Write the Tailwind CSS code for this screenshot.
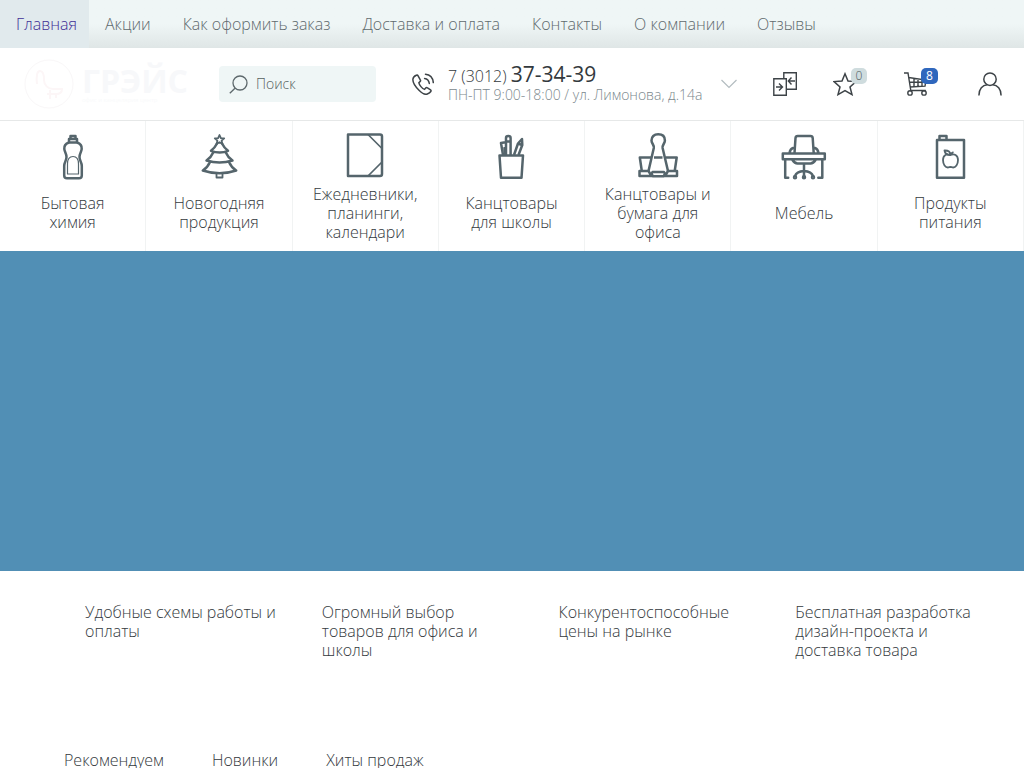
<!DOCTYPE html>
<html lang="ru">
<head>
<meta charset="utf-8">
<meta name="viewport" content="width=device-width, initial-scale=1">
<title>Грэйс</title>
<script src="https://cdn.jsdelivr.net/npm/@tailwindcss/browser@4"></script>
</head>
<body class="overflow-x-hidden bg-white font-['Open_Sans','Noto_Sans',sans-serif] text-base leading-[19px] font-light text-[#33393d]">

<nav class="flex h-12 bg-linear-to-b from-[#eff6f6] from-50% to-[#dfe6e6] leading-[19px] text-[#5f6a6e]">
  <a href="#" class="flex items-center bg-[#e1eaed] pr-3 pl-4 text-[#3f2f96]">Главная</a>
  <a href="#" class="flex items-center px-4">Акции</a>
  <a href="#" class="flex items-center px-4">Как оформить заказ</a>
  <a href="#" class="flex items-center px-4">Доставка и оплата</a>
  <a href="#" class="flex items-center px-4">Контакты</a>
  <a href="#" class="flex items-center px-4">О компании</a>
  <a href="#" class="flex items-center px-4">Отзывы</a>
</nav>

<header class="flex h-[73px] items-center border-b border-[#e6e8e8] pr-[22px] pl-6">
  <a href="#" class="flex w-[195px] shrink-0 items-center gap-2">
    <svg class="size-[50px] shrink-0" viewBox="0 0 50 50" fill="none" stroke="#fcf6f7" stroke-width="2"><circle cx="25" cy="25" r="24" stroke="#f9f7f8" stroke-width="1"/><path d="M13 25c-1-8 0-13 3-13s4 4 4 9 4 9 9 9h9c0 4-3 5-6 5h-9M26 31v9M32 35v4"/></svg>
    <span class="flex flex-col">
      <span class="text-[32px] leading-[32px] font-bold text-[#f7f8fa]">ГРЭЙС</span>
      <span class="text-[6px] leading-[6px] font-normal text-[#f9fafb]">офис и канцелярия центр</span>
    </span>
  </a>

  <form class="flex h-9 w-[157px] items-center gap-2 rounded bg-[#eff6f6] pl-[10px]">
    <button type="button" aria-label="Найти" class="shrink-0"><svg class="size-[19px]" viewBox="0 0 19 19" fill="none" stroke="#5d686c" stroke-width="1.3"><circle cx="11" cy="8" r="7"/><path d="M6 13.2.8 18.3"/></svg></button>
    <input type="text" aria-label="Поиск" placeholder="Поиск" class="min-w-0 flex-1 bg-transparent text-sm outline-none placeholder:text-[#56615f]">
  </form>

  <svg class="ml-9 size-[22px] shrink-0" viewBox="0 0 22 22" fill="none" stroke="#3d4347" stroke-width="1.5" stroke-linecap="round" stroke-linejoin="round"><path d="M4.3 2.3C2.600 3 1 4.500.9 6.200.7 8.700 3.300 13.500 7 17.200c3.200 3.200 6.600 4.500 8.300 3.800 1.600-.6 3-1.700 3.500-2.500.5-.7.300-1.200-.3-1.600l-3-2c-.7-.5-1.400-.3-1.900.2l-1 1.300c-2.500-.9-5.300-4.300-5.800-6.700l1.200-1.100c.6-.5.7-1.100.3-1.700L6.100 2.800c-.4-.7-1.100-.8-1.800-.5ZM12.600 5.400c2.800.4 4.300 2 4.700 5M13.500 1.200c4.600.5 7.400 3.700 7.800 8.400"/></svg>
  <div class="ml-[14px] flex shrink-0 items-center gap-3">
    <div class="min-w-[261px]">
      <a href="tel:73012373439" class="block leading-[20px]">7 (3012) <span class="text-[21px] leading-[20px] font-normal">37-34-39</span></a>
      <p class="text-sm leading-[18px] text-[#7b888d]">ПН-ПТ 9:00-18:00 / ул. Лимонова, д.14а</p>
    </div>
    <button type="button" aria-label="Все контакты"><svg class="h-[10px] w-4" viewBox="0 0 16 10" fill="none" stroke="#b3bcc0" stroke-width="1.2"><path d="m.5 1 7.500 7.500L15.500 1"/></svg></button>
  </div>

  <div class="ml-auto flex shrink-0 items-center">
    <a href="#" aria-label="Сравнение"><svg class="block size-6" viewBox="0 0 24 24" fill="none" stroke="#3d4347" stroke-width="1.400"><path d="M.8 6.700h12.500v16.500H.8ZM10.800 6.500V.8h12.500v16.500h-9.800M3 15h6.500M6 11.500 9.500 15 6 18.500M22 9h-6M18.500 5.500 15.300 9l3.200 3.500"/></svg></a>
    <a href="#" aria-label="Избранное" class="relative ml-9 w-[34px]">
      <svg class="block size-6" viewBox="0 0 24 24" fill="none" stroke="#3d4347" stroke-width="1.500"><path d="m12 1.800 3 7.200 8 .6-6 5.300 2 7.700-7-4-7 4 2-7.700-6-5.300 8-.6Z"/></svg>
      <span class="absolute -top-1 right-0 flex h-4 w-4 items-center justify-center rounded-[5px] bg-[#cfdcde] text-xs text-[#4d585c]">0</span>
    </a>
    <a href="#" aria-label="Корзина" class="relative ml-[37px] w-[34px]">
      <svg class="block size-6" viewBox="0 0 24 24" fill="none" stroke="#3d4347" stroke-width="1.400"><path d="M0 1h4l2.800 17.500h15M4.600 5.500 22 8l-1 6.200-15 .8M5.300 10.200h16M10 6v9M14 7v8M18 7.500v6.500"/><circle cx="6" cy="20.900" r="2.200"/><circle cx="20" cy="20.900" r="2.200"/></svg>
      <span class="absolute -top-1 right-0 flex h-4 w-[17px] items-center justify-center rounded-[5px] bg-[#2f67bd] text-xs font-normal text-white">8</span>
    </a>
    <a href="#" aria-label="Личный кабинет" class="ml-10"><svg class="block size-6" viewBox="0 0 24 24" fill="none" stroke="#3d4347" stroke-width="1.500"><circle cx="12" cy="7.200" r="6.200"/><path d="M.9 23.500C.9 17 4.500 13 9.300 12.800M14.700 12.800c4.800.2 8.400 4.200 8.400 10.700"/></svg></a>
  </div>
</header>

<section class="grid grid-cols-7 text-center">
  <a href="#" class="flex h-[130px] flex-col items-center border-r border-[#f1f3f3] pt-[11px]">
    <svg class="size-12 shrink-0" viewBox="0 0 48 48" fill="none" stroke="#55656c" stroke-width="2.500" stroke-linejoin="round"><path d="M21.500 4h5v3h-5ZM20 7h8v3.500h-8Z"/><path d="M20 10.500c-4 1.300-5 3.500-4.700 6.500.3 3 2.200 4.500 2.200 8 0 4-2.300 5-2.300 9v9.500c0 2 .8 2.800 2.800 2.800h12c2 0 2.800-.8 2.800-2.800V34c0-4-2.300-5-2.300-9 0-3.500 1.900-5 2.200-8 .3-3-.7-5.200-4.700-6.500"/><path stroke-width="1.200" d="M18.500 42V32c0-5 2-7.500 5.500-7.500s5.500 2.500 5.500 7.500v10Z"/></svg>
    <span class="flex h-[66px] items-center">Бытовая<br>химия</span>
  </a>
  <a href="#" class="flex h-[130px] flex-col items-center border-r border-[#f1f3f3] pt-[11px]">
    <svg class="size-12 shrink-0" viewBox="0 0 48 48" fill="none" stroke="#55656c" stroke-width="2.500" stroke-linejoin="round"><path stroke-width="1.800" d="m24.500 3 1.400 3.200 3.300.2-2.600 2.300.9 3.300-3-1.800-3 1.800.9-3.300-2.600-2.300 3.300-.2Z"/><path d="M22 11.500c-1.500 3-3.500 5.500-6 7.300 5.500 2 12 2 17 0-2.500-1.800-4.500-4.300-6-7.300M18.500 20c-1.500 3.500-3.800 6.300-7 8.500 8 2.500 18 2.500 26 0-3.200-2.200-5.500-5-7-8.500M15 30c-1.500 3.500-4 6.500-7.200 8.500 10.500 3.500 23 3.500 33.400 0C38 36.500 35.500 33.500 34 30"/><path stroke-width="1.800" d="M21.500 42v3.500h6V42"/></svg>
    <span class="flex h-[66px] items-center">Новогодняя<br>продукция</span>
  </a>
  <a href="#" class="flex h-[130px] flex-col items-center border-r border-[#f1f3f3] pt-[11px]">
    <svg class="size-12 shrink-0" viewBox="0 0 48 48" fill="none" stroke="#55656c" stroke-width="2.500" stroke-linejoin="round"><path d="M7 2.500h32q2 0 2 2v37.500q0 2-2 2H7Z"/><path stroke-width="1.700" d="m27 2.500 14 14M27 44l14-14"/></svg>
    <span class="flex h-[66px] items-center">Ежедневники,<br>планинги,<br>календари</span>
  </a>
  <a href="#" class="flex h-[130px] flex-col items-center border-r border-[#f1f3f3] pt-[11px]">
    <svg class="size-12 shrink-0" viewBox="0 0 48 48" fill="none" stroke="#55656c" stroke-width="2.500" stroke-linejoin="round"><path d="M12.500 23.500h23.500l-1.500 22.300H14Z"/><path d="M19 23V6q0-2 2.300-2t2.300 2v17M19 9.500h4.500M16 23l-2-12 4.500-.8M17.500 15l1 8M27 23l4-11.500 4-4.500.3 6L31.500 23M31 11.500l4 1.500"/></svg>
    <span class="flex h-[66px] items-center">Канцтовары<br>для школы</span>
  </a>
  <a href="#" class="flex h-[130px] flex-col items-center border-r border-[#f1f3f3] pt-[11px]">
    <svg class="size-12 shrink-0" viewBox="0 0 48 48" fill="none" stroke="#55656c" stroke-width="2.500" stroke-linejoin="round"><path d="M14.500 39 19.800 16c.6-3-2.300-4.500-2.300-7.500C17.500 4.700 20 2.300 24.200 2.300s6.700 2.400 6.700 6.200c0 3-2.900 4.500-2.300 7.500L34 39"/><path d="M17 25.500H5.800l2 13.500M31.500 25.500h11.200l-2 13.500M20 25.500h8.500M5.500 39h9l3 5h-12ZM43 39h-9l-3 5h12ZM18.500 40h11.500l1 2-1.500 2.200H19L17.500 42Z"/></svg>
    <span class="flex h-[66px] items-center">Канцтовары и<br>бумага для<br>офиса</span>
  </a>
  <a href="#" class="flex h-[130px] flex-col items-center border-r border-[#f1f3f3] pt-[11px]">
    <svg class="size-12 shrink-0" viewBox="0 0 48 48" fill="none" stroke="#55656c" stroke-width="2.500" stroke-linejoin="round" stroke-linecap="round"><path d="M2.800 21.500h42v5.700h-42ZM14.500 21l1-15q.2-2 2.200-2h12.800q2 0 2.200 2l1 15M13 16c-2 .5-3 2-3.500 5M35 16c2 .5 3 2 3.500 5M5.200 28v17.800h3M42.300 28v17.800h-4M12.500 28c1.500 2.500 3 3.500 5 3.500h13c2 0 3.500-1 5-3.500M24 32v13M24 39c-5 .3-8 2-9 5M24 39c5 .3 8 2 9 5"/><circle cx="15" cy="45.200" r="1"/><circle cx="24" cy="45.200" r="1"/><circle cx="33" cy="45.200" r="1"/></svg>
    <span class="flex h-[66px] items-center">Мебель</span>
  </a>
  <a href="#" class="flex h-[130px] flex-col items-center border-r border-[#f1f3f3] pt-[11px]">
    <svg class="size-12 shrink-0" viewBox="0 0 48 48" fill="none" stroke="#55656c" stroke-width="2.500" stroke-linejoin="round"><path d="M11 8h27v37.800H11ZM13.500 7.500V4h7v3.500"/><path stroke-width="1.800" d="M24.500 23c-3.500-1.700-7.500-.2-7.500 5 0 4.500 2.500 7.500 4.800 7.500 1.200 0 1.700-.5 2.700-.5s1.500.5 2.700.5c2.300 0 4.800-3 4.800-7.500 0-5.200-4-6.700-7.500-5ZM24.500 23c0-3-2-4.700-6-4.500.5 3.200 2.500 4.700 6 4.500ZM24.500 23c.5-1.500 1.500-2.500 3-3"/></svg>
    <span class="flex h-[66px] items-center">Продукты<br>питания</span>
  </a>
</section>

<section aria-label="Баннер" class="h-80 bg-[#518fb5]"></section>

<main>
  <ul class="grid grid-cols-4 gap-x-10 pt-8 pr-8 pl-[85px]">
    <li>Удобные схемы работы и оплаты</li>
    <li>Огромный выбор товаров для офиса и школы</li>
    <li>Конкурентоспособные цены на рынке</li>
    <li>Бесплатная разработка дизайн-проекта и доставка товара</li>
  </ul>
  <div class="flex gap-12 overflow-hidden pt-[91px] pl-16">
    <button type="button">Рекомендуем</button>
    <button type="button">Новинки</button>
    <button type="button">Хиты продаж</button>
  </div>
</main>
</body>
</html>
